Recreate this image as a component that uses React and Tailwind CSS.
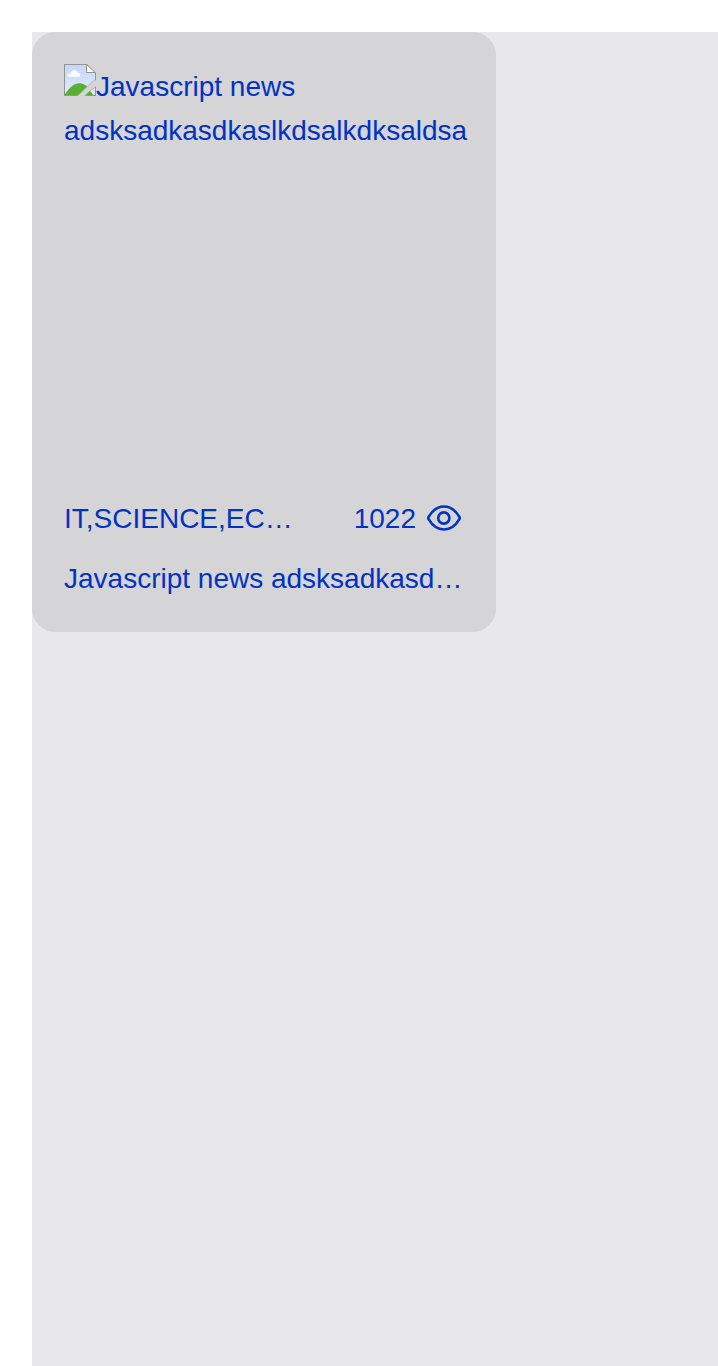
import React from 'react';

function BrokenImageIcon() {
  return (
    <svg className="block h-8 w-8 shrink-0" viewBox="0 0 32 32">
      <defs>
        <linearGradient id="sky" x1="0" y1="0" x2="0" y2="1">
          <stop offset="0" stopColor="#c3d7fc" />
          <stop offset="1" stopColor="#e3eafa" />
        </linearGradient>
      </defs>
      <path d="M0 0H23L32 9V16L28.5 17.5L13.5 32H0Z" fill="#939393" />
      <path d="M1 1H22V9H31V16L28 17.5L14.5 31H1Z" fill="url(#sky)" />
      <path d="M23 1.6V8H30Z" fill="#fff" />
      <path d="M22.5 0.5V8.5H31.5" fill="none" stroke="#939393" />
      <path d="M5 12.8C3.2 12.8 3 9.8 5.4 9.5C6.4 9.4 6.8 9.2 7.3 8C8.5 5.2 13 5.4 13.7 8.8C15.2 9 16.3 10 16.3 11.2C16.3 12.3 15.6 12.8 14.7 12.8Z" fill="#fff" />
      <path d="M1 31V30.3C5.5 23 10.5 19.2 15.5 19.2C18.5 19.2 21 20.6 23.2 22.6L14.5 31Z" fill="#5aad35" />
      <path d="M20.5 32L25.5 27L32 22.5V32Z" fill="#939393" />
      <path d="M22 31L25.8 27.3L31 23.8V31Z" fill="#dce6fb" />
      <path d="M22 31L25.8 27.1C27.2 28.2 28.2 29.5 29.3 31Z" fill="#5aad35" />
    </svg>
  );
}

function EyeIcon() {
  return (
    <svg
      className="block h-[26px] w-[34px] shrink-0"
      viewBox="0 0 34 26"
      fill="none"
      stroke="currentColor"
      strokeWidth="2.6"
      strokeLinejoin="round"
    >
      <path d="M1.8 14.4C1.1 13.5 1.1 12.5 1.8 11.6C5.6 5.1 10.6 1.5 17 1.5S28.4 5.1 32.2 11.6C32.9 12.5 32.9 13.5 32.2 14.4C28.4 20.9 23.4 24.5 17 24.5S5.6 20.9 1.8 14.4Z" />
      <circle cx="16.8" cy="13" r="5.6" />
    </svg>
  );
}

function ArticleCard({ title, topics, views }) {
  return (
    <article className="flex h-[600px] w-[464px] flex-col rounded-3xl bg-[#d5d5d7] p-8">
      <div className="h-[400px] w-[404px] shrink-0 overflow-hidden">
        <div className="flex h-11">
          <BrokenImageIcon />
          <span className="pt-px">Javascript news</span>
        </div>
        <p className="pt-px">adsksadkasdkaslkdsalkdksaldsa</p>
      </div>
      <div className="mt-8 flex h-11 shrink-0 items-center">
        <p className="w-[230px] truncate pt-px">{topics}</p>
        <span className="ml-auto pt-px">{views}</span>
        <div className="ml-[11px] mr-[3px]">
          <EyeIcon />
        </div>
      </div>
      <p className="mt-4 shrink-0 truncate pt-px">{title}</p>
    </article>
  );
}

export default function App() {
  return (
    <main className="h-[1366px] overflow-hidden bg-white pt-8 pl-8 font-['Liberation_Sans',Arial,sans-serif] text-[28px] leading-[44px] text-[#0232c2]">
      <section className="h-full bg-[#e8e8ea]">
        <ArticleCard
          title="Javascript news adsksadkasdkaslkdsalkdksaldsa"
          topics="IT,SCIENCE,ECONOMICS"
          views={1022}
        />
      </section>
    </main>
  );
}
